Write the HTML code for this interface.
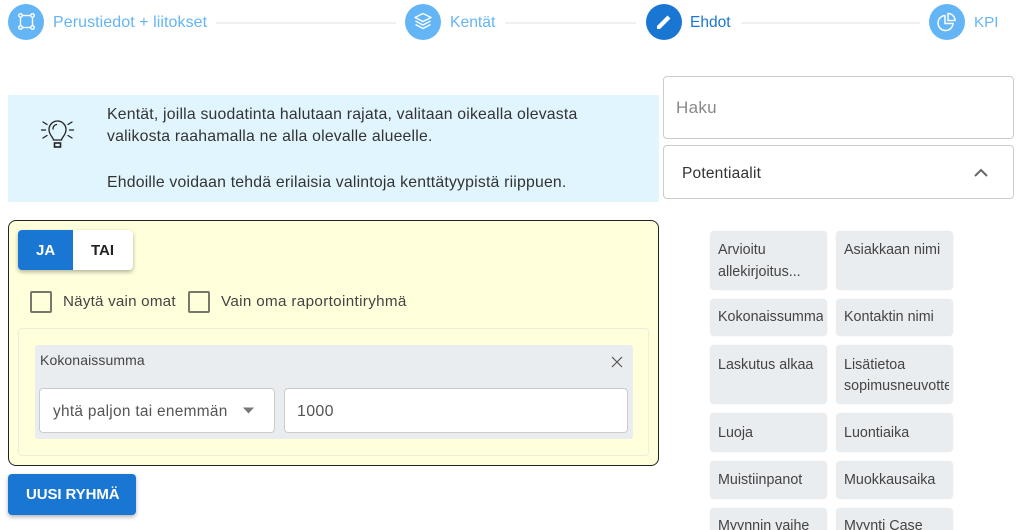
<!DOCTYPE html>
<html lang="fi"><head><meta charset="utf-8"><title>Ehdot</title>
<style>
html{margin:0;padding:0;background:#fff;width:1024px;height:530px;overflow:hidden}
body{margin:0;padding:0;background:#fff;width:1024px;height:530px;overflow:hidden;position:relative;font-family:"Liberation Sans",sans-serif;color:#333}
.a{position:absolute;box-sizing:border-box}
.t{position:absolute;white-space:nowrap;line-height:20px}
.c{position:absolute;top:4px;width:36px;height:36px;border-radius:50%;background:#64b5f6}
.c svg{position:absolute;left:0;top:0}
.l{position:absolute;top:22px;height:2px;background:#f0f0f0}
.chip{position:absolute;box-sizing:border-box;width:117px;background:#eaedf0;border-radius:4px;box-shadow:0 0 1px rgba(0,0,0,.12);padding:8px 0 0 8px;font-size:14.3px;line-height:22px;color:#444;overflow:hidden}
.chip span{display:block;white-space:nowrap;overflow:hidden;width:105px}
.s{padding-top:9px}
.u{padding-top:7px}
</style></head>
<body>
<div class="c" style="left:8px"><svg width="36" height="36" fill="none" stroke="#fff" stroke-width="1.4"><rect x="12.500" y="11.500" width="12" height="12"/><circle cx="12.500" cy="11.500" r="1.800" fill="#64b5f6"/><circle cx="24.500" cy="11.500" r="1.800" fill="#64b5f6"/><circle cx="12.500" cy="23.500" r="1.800" fill="#64b5f6"/><circle cx="24.500" cy="23.500" r="1.800" fill="#64b5f6"/></svg></div>
<div class="t" style="left:53px;top:13px;font-size:16px;color:#64b5f6;letter-spacing:.07px">Perustiedot + liitokset</div>
<div class="l" style="left:216px;width:180px"></div>
<div class="c" style="left:405px"><svg width="36" height="36" fill="none" stroke="#fff" stroke-width="1.4" stroke-linejoin="round"><path d="M18 9.500L26 13.500L18 17.500L10 13.500Z"/><path d="M10.500 17L18 21L25.500 17"/><path d="M10.500 20.500L18 24.500L25.500 20.500"/></svg></div>
<div class="t" style="left:450px;top:13px;font-size:15.700px;color:#64b5f6">Kentät</div>
<div class="l" style="left:505px;width:131px"></div>
<div class="c" style="left:646px;background:#1976d2"><svg width="36" height="36"><path d="M11 25L11 22L21.500 11.500L24.500 14.500L14 25Z" fill="#fff"/></svg></div>
<div class="t" style="left:690px;top:13px;font-size:15.500px;color:#1976d2">Ehdot</div>
<div class="l" style="left:741px;width:179px"></div>
<div class="c" style="left:929px"><svg width="36" height="36" fill="none" stroke="#fff" stroke-width="1.5"><path d="M16 11.500A7.500 7.500 0 1 0 24 19.500H16Z"/><path d="M19 9.500A7 7 0 0 1 26 16.500H19Z"/></svg></div>
<div class="t" style="left:974px;top:13px;font-size:15.200px;color:#64b5f6">KPI</div>

<div class="a" style="left:8px;top:95px;width:651px;height:107px;background:#e1f5fe"></div>
<svg class="a" style="left:38px;top:116px" width="38" height="36" fill="none" stroke="#222" stroke-width="1.3" stroke-linecap="round"><path d="M15.500 24C15 21 11 19 11 13.500A8.500 8.500 0 0 1 28 13.500C28 19 24 21 23.500 24Z"/><path d="M15 13C15 10.500 16.500 9 18.500 8.500"/><rect x="16.500" y="27" width="6" height="4" stroke-width="1.600"/><path d="M3.500 14H7.500M31.500 14H35.500M5 6L9 8.500M34 6L30 8.500M5 22L9 19.500M34 22L30 19.500"/></svg>
<div class="t" style="left:107px;top:105px;font-size:15.800px;letter-spacing:.2px;color:#333">Kentät, joilla suodatinta halutaan rajata, valitaan oikealla olevasta</div>
<div class="t" style="left:107px;top:127px;font-size:15.800px;letter-spacing:.2px;color:#333">valikosta raahamalla ne alla olevalle alueelle.</div>
<div class="t" style="left:107px;top:173px;font-size:15.800px;letter-spacing:.2px;color:#333">Ehdoille voidaan tehdä erilaisia valintoja kenttätyypistä riippuen.</div>

<div class="a" style="left:8px;top:220px;width:651px;height:246px;background:#ffffdc;border:1px solid #222;border-radius:8px"></div>
<div class="a" style="left:18px;top:230px;width:115px;height:40px;background:#fff;border-radius:4px;box-shadow:0 2px 4px rgba(0,0,0,.3)"></div>
<div class="a" style="left:18px;top:230px;width:55px;height:40px;background:#1976d2;border-radius:4px 0 0 4px"></div>
<div class="t" style="left:36px;top:241px;font-size:15px;font-weight:bold;color:#fff">JA</div>
<div class="t" style="left:91px;top:241px;font-size:15px;font-weight:bold;color:#222">TAI</div>
<div class="a" style="left:30px;top:291px;width:22px;height:22px;border:2px solid #77776a;border-radius:2px"></div>
<div class="t" style="left:63px;top:292px;font-size:15.200px;letter-spacing:.2px;color:#444">Näytä vain omat</div>
<div class="a" style="left:188px;top:291px;width:22px;height:22px;border:2px solid #77776a;border-radius:2px"></div>
<div class="t" style="left:221px;top:292px;font-size:15.200px;letter-spacing:.35px;color:#444">Vain oma raportointiryhmä</div>

<div class="a" style="left:18px;top:328px;width:631px;height:128px;border:1px solid #eeeedd;border-radius:4px"></div>
<div class="a" style="left:35px;top:345px;width:598px;height:94px;background:#eaedf0;border-radius:3px"></div>
<div class="t" style="left:40px;top:350px;font-size:14px;letter-spacing:.1px;color:#444">Kokonaissumma</div>
<svg class="a" style="left:610px;top:355px" width="14" height="14" stroke="#555" stroke-width="1.200"><path d="M2 2L12 12M12 2L2 12"/></svg>
<div class="a" style="left:39px;top:388px;width:236px;height:45px;background:#fff;border:1px solid #ccc;border-radius:4px"></div>
<div class="t" style="left:53px;top:402px;font-size:15.400px;letter-spacing:.3px;color:#555">yhtä paljon tai enemmän</div>
<svg class="a" style="left:241px;top:407px" width="14" height="7"><path d="M2 .5H13L7.500 6.500Z" fill="#777"/></svg>
<div class="a" style="left:284px;top:388px;width:344px;height:45px;background:#fff;border:1px solid #ccc;border-radius:4px"></div>
<div class="t" style="left:297px;top:402px;font-size:16px;letter-spacing:.3px;color:#555">1000</div>

<div class="a" style="left:8px;top:474px;width:128px;height:41px;background:#1976d2;border-radius:4px;box-shadow:0 2px 4px rgba(0,0,0,.3)"></div>
<div class="t" style="left:26px;top:485px;font-size:15px;font-weight:bold;color:#fff;letter-spacing:-.1px">UUSI RYHMÄ</div>

<div class="a" style="left:663px;top:76px;width:351px;height:63px;background:#fff;border:1px solid #ccc;border-radius:4px"></div>
<div class="t" style="left:676px;top:98px;font-size:17px;letter-spacing:.3px;color:#888">Haku</div>
<div class="a" style="left:663px;top:145px;width:351px;height:54px;background:#fff;border:1px solid #ccc;border-radius:4px"></div>
<div class="t" style="left:682px;top:164px;font-size:15.500px;letter-spacing:.2px;color:#333">Potentiaalit</div>
<svg class="a" style="left:973px;top:166px" width="16" height="12" fill="none" stroke="#666" stroke-width="2"><path d="M2 10L8 4L14 10"/></svg>

<div class="chip" style="left:710px;top:231px;height:59px"><span>Arvioitu</span><span>allekirjoitus...</span></div>
<div class="chip" style="left:836px;top:231px;height:59px"><span>Asiakkaan nimi</span></div>
<div class="chip u" style="left:710px;top:299px;height:37px"><span>Kokonaissumma</span></div>
<div class="chip u" style="left:836px;top:299px;height:37px"><span>Kontaktin nimi</span></div>
<div class="chip s" style="left:710px;top:345px;height:59px"><span>Laskutus alkaa</span></div>
<div class="chip s" style="left:836px;top:345px;height:59px"><span>Lisätietoa</span><span style="margin-top:-1px">sopimusneuvotteluista</span></div>
<div class="chip s" style="left:710px;top:413px;height:39px"><span>Luoja</span></div>
<div class="chip s" style="left:836px;top:413px;height:39px"><span>Luontiaika</span></div>
<div class="chip" style="left:710px;top:461px;height:38px"><span>Muistiinpanot</span></div>
<div class="chip" style="left:836px;top:461px;height:38px"><span>Muokkausaika</span></div>
<div class="chip u" style="left:710px;top:508px;height:38px"><span>Myynnin vaihe</span></div>
<div class="chip u" style="left:836px;top:508px;height:38px"><span>Myynti Case</span></div>
</body></html>
